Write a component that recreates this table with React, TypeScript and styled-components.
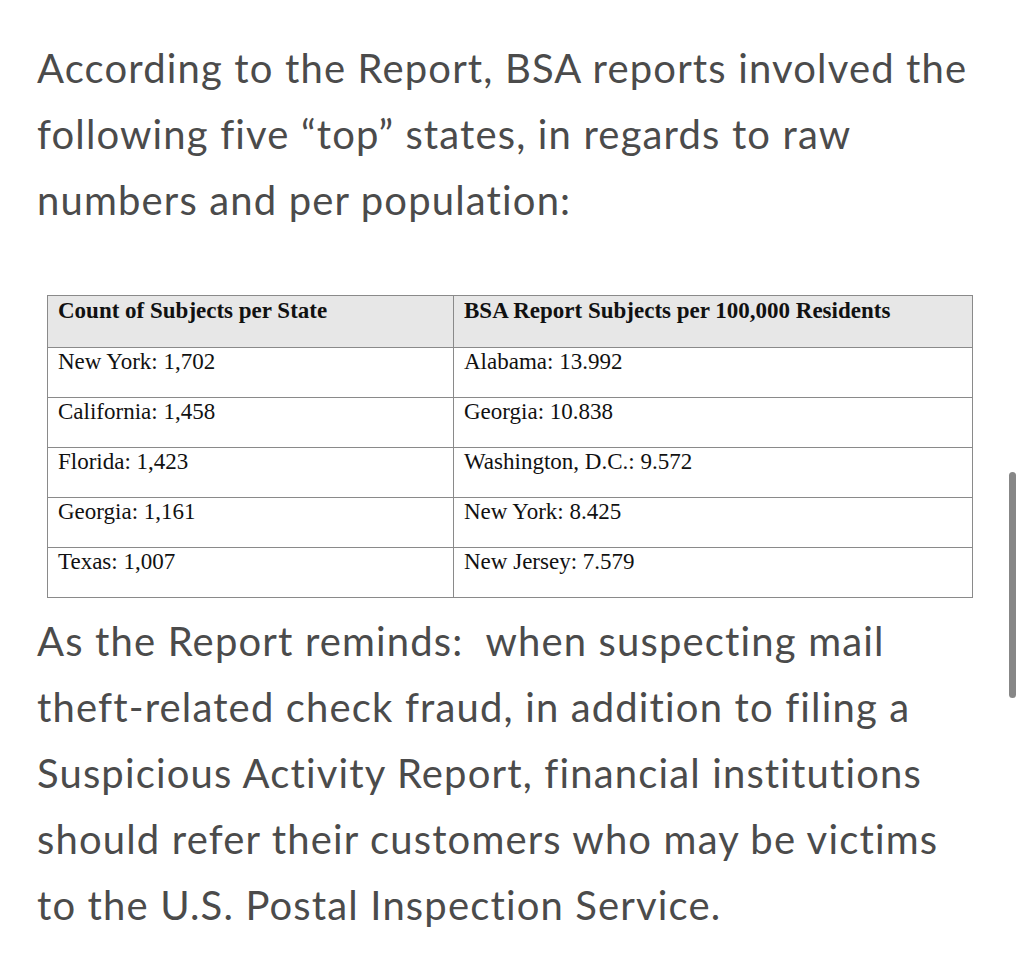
import styled, { createGlobalStyle } from "styled-components";

const GlobalStyle = createGlobalStyle`
    html, body {
        margin: 0;
        padding: 0;
        background: #ffffff;
    }
`;

const Page = styled.main`
    width: 1024px;
    min-height: 961px;
    box-sizing: border-box;
    padding: 35px 40px 0 37px;
    position: relative;
    overflow: hidden;
`;

const Paragraph = styled.p<{ $gapBefore?: number; $gapAfter?: number }>`
    margin: ${(p) => p.$gapBefore ?? 0}px 0 ${(p) => p.$gapAfter ?? 0}px;
    font-family: "Lato", "Liberation Sans", sans-serif;
    font-size: 40px;
    line-height: 66px;
    letter-spacing: 1.15px;
    font-variant-ligatures: none;
    color: #4b4b4b;
`;

const Table = styled.table`
    width: 926px;
    margin: 0 0 0 10px;
    border-collapse: collapse;
    font-family: "Liberation Serif", "Times New Roman", serif;
    font-size: 23px;
    color: #111111;
`;

const HeadCell = styled.th`
    height: 52px;
    padding: 2px 10px 0;
    box-sizing: border-box;
    text-align: left;
    vertical-align: top;
    font-weight: bold;
    background: #e7e7e7;
    border: 1px solid #8a8a8a;
`;

const Cell = styled.td<{ $wide?: boolean }>`
    width: ${(p) => (p.$wide ? "auto" : "406px")};
    height: 50px;
    padding: 1px 10px 0;
    box-sizing: border-box;
    vertical-align: top;
    border: 1px solid #8a8a8a;
`;

const Scrollbar = styled.div`
    position: absolute;
    left: 1009px;
    top: 472px;
    width: 7px;
    height: 226px;
    border-radius: 4px;
    background: #878787;
`;

const rows: [string, string][] = [
    ["New York: 1,702", "Alabama: 13.992"],
    ["California: 1,458", "Georgia: 10.838"],
    ["Florida: 1,423", "Washington, D.C.: 9.572"],
    ["Georgia: 1,161", "New York: 8.425"],
    ["Texas: 1,007", "New Jersey: 7.579"]
];

export default function App() {
    return (
        <>
            <GlobalStyle />
            <Page>
                <Paragraph $gapAfter={62}>
                    According to the Report, BSA reports involved the
                    <br />
                    following five “top” states, in regards to raw
                    <br />
                    numbers and per population:
                </Paragraph>
                <Table>
                    <thead>
                        <tr>
                            <HeadCell>Count of Subjects per State</HeadCell>
                            <HeadCell>BSA Report Subjects per 100,000 Residents</HeadCell>
                        </tr>
                    </thead>
                    <tbody>
                        {rows.map(([count, perCapita]) => (
                            <tr key={count}>
                                <Cell>{count}</Cell>
                                <Cell $wide>{perCapita}</Cell>
                            </tr>
                        ))}
                    </tbody>
                </Table>
                <Paragraph $gapBefore={10}>
                    As the Report reminds:&nbsp; when suspecting mail
                    <br />
                    theft-related check fraud, in addition to filing a
                    <br />
                    Suspicious Activity Report, financial institutions
                    <br />
                    should refer their customers who may be victims
                    <br />
                    to the U.S. Postal Inspection Service.
                </Paragraph>
                <Scrollbar />
            </Page>
        </>
    );
}
